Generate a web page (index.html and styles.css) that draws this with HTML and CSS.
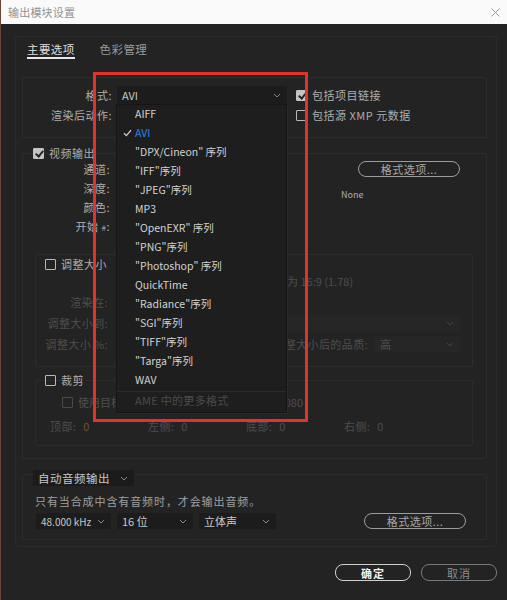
FILE: index.html
```html
<!DOCTYPE html>
<html lang="zh-CN">
<head>
  <meta charset="UTF-8">
  <title>输出模块设置</title>
  <link rel="stylesheet" href="styles.css">
</head>
<body>
  <div class="window">
    <div class="titlebar">
      <span>输出模块设置</span>
      <svg class="close" width="9" height="9" viewBox="0 0 9 9"><path d="M0.5 0.5l8 8M8.5 0.5l-8 8" stroke="#9a9a9a" stroke-width="1"/></svg>
    </div>

    <div class="main">
      <div class="tabs">
        <span class="tab active">主要选项</span>
        <span class="tab">色彩管理</span>
      </div>

      <!-- format -->
      <div class="box format">
        <div class="frow">
          <span class="lbl">格式:</span>
          <div class="select wide"><span>AVI</span><svg class="chev" width="8" height="5" viewBox="0 0 8 5"><path d="M1 1l3 3 3-3" fill="none" stroke="currentColor"/></svg></div>
          <span class="cb on"></span><span class="cbl">包括项目链接</span>
        </div>
        <div class="frow">
          <span class="lbl">渲染后动作:</span>
          <div class="select wide"></div>
          <span class="cb"></span><span class="cbl">包括源 XMP 元数据</span>
        </div>
      </div>

      <!-- video -->
      <div class="group video">
        <div class="legend"><span class="cb on"></span><span>视频输出</span></div>
        <div class="vrow">
          <span class="vl">通道:</span><span class="vv"></span>
          <div class="vr"><span class="btn fmt">格式选项...</span></div>
        </div>
        <div class="vrow">
          <span class="vl">深度:</span><span class="vv"></span>
          <div class="vr"><span class="none">None</span></div>
        </div>
        <div class="vrow">
          <span class="vl">颜色:</span><span class="vv"></span>
        </div>
        <div class="vrow">
          <span class="vl">开始 <small>#</small>:</span><span class="vv"></span>
        </div>

        <div class="group sub resize">
          <div class="legend"><span class="cb"></span><span>调整大小</span></div>
          <div class="rrow">
            <span></span><span></span><span class="dim">为 16:9 (1.78)</span>
          </div>
          <div class="rrow">
            <span class="rl dim">渲染在:</span><span></span><span></span>
          </div>
          <div class="rrow">
            <span class="rl dim">调整大小到:</span><span></span>
            <div class="select dimsel"><span></span><svg class="chev" width="8" height="5" viewBox="0 0 8 5"><path d="M1 1l3 3 3-3" fill="none" stroke="currentColor"/></svg></div>
          </div>
          <div class="rrow">
            <span class="rl dim">调整大小 %:</span>
            <div class="quality">
              <span class="dim">调整大小后的品质:</span>
              <div class="select dimsel q"><span>高</span><svg class="chev" width="8" height="5" viewBox="0 0 8 5"><path d="M1 1l3 3 3-3" fill="none" stroke="currentColor"/></svg></div>
            </div>
          </div>
        </div>

        <div class="group sub crop">
          <div class="legend"><span class="cb"></span><span>裁剪</span></div>
          <div class="crow1">
            <span class="cb dimcb"></span><span class="dim">使用目标</span>
            <span class="dim size">1080</span>
          </div>
          <div class="crow2">
            <span class="dim">顶部: <b class="hot">0</b></span>
            <span class="dim">左侧: <b>0</b></span>
            <span class="dim">底部: <b>0</b></span>
            <span class="dim">右侧: <b>0</b></span>
          </div>
        </div>
      </div>

      <!-- audio -->
      <div class="group audio">
        <div class="select auto"><span>自动音频输出</span><svg class="chev" width="8" height="5" viewBox="0 0 8 5"><path d="M1 1l3 3 3-3" fill="none" stroke="currentColor"/></svg></div>
        <p class="note">只有当合成中含有音频时，才会输出音频。</p>
        <div class="arow">
          <div class="select s1"><span class="latin">48.000 kHz</span><svg class="chev" width="8" height="5" viewBox="0 0 8 5"><path d="M1 1l3 3 3-3" fill="none" stroke="currentColor"/></svg></div>
          <div class="select s2"><span>16 位</span><svg class="chev" width="8" height="5" viewBox="0 0 8 5"><path d="M1 1l3 3 3-3" fill="none" stroke="currentColor"/></svg></div>
          <div class="select s3"><span>立体声</span><svg class="chev" width="8" height="5" viewBox="0 0 8 5"><path d="M1 1l3 3 3-3" fill="none" stroke="currentColor"/></svg></div>
          <span class="btn fmt">格式选项...</span>
        </div>
      </div>
    </div>

    <div class="footer">
      <span class="btn ok">确定</span>
      <span class="btn cancel">取消</span>
    </div>

    <!-- open format list -->
    <ul class="menu">
      <li>AIFF</li>
      <li class="sel"><svg class="tick" width="9" height="8" viewBox="0 0 9 8"><path d="M1 4.2l2.4 2.4L8 1.2" fill="none" stroke="#d0d0d0" stroke-width="1.3"/></svg>AVI</li>
      <li>"DPX/Cineon" 序列</li>
      <li>"IFF"序列</li>
      <li>"JPEG"序列</li>
      <li>MP3</li>
      <li>"OpenEXR" 序列</li>
      <li>"PNG"序列</li>
      <li>"Photoshop" 序列</li>
      <li>QuickTime</li>
      <li>"Radiance"序列</li>
      <li>"SGI"序列</li>
      <li>"TIFF"序列</li>
      <li>"Targa"序列</li>
      <li>WAV</li>
      <li class="more">AME 中的更多格式</li>
    </ul>

    <div class="mark"></div>
  </div>
</body>
</html>
```

FILE: styles.css
```css
* {
  box-sizing: border-box;
}
body {
  margin: 0;
  background: #232323;
  font-family: "Noto Sans CJK SC", "Noto Sans", sans-serif;
  font-size: 11px;
  color: #aeaeae;
}
.window {
  position: relative;
  width: 507px;
  height: 600px;
  background: #232323;
  border-left: 1px solid #6a4537;
  overflow: hidden;
}
.titlebar {
  height: 24px;
  background: #fafafa;
  display: flex;
  align-items: center;
  justify-content: space-between;
  padding: 0 7px 0 7px;
  color: #939393;
  font-size: 11px;
  letter-spacing: 0.2px;
}
.main {
  margin: 12px 10px 0 14px;
  border: 1px solid #2c2c2c;
  border-radius: 3px;
  padding: 4px 9px 6px 6px;
}
.tabs {
  display: flex;
  gap: 25px;
  margin-left: 5px;
}
.tab {
  height: 18px;
  line-height: 16px;
  font-size: 11.5px;
  color: #9a9a9a;
  letter-spacing: 0.4px;
}
.tab.active {
  color: #dedede;
  border-bottom: 2px solid #e8e8e8;
}
.box {
  border: 1px solid #2c2c2c;
  border-radius: 2px;
}
.format {
  margin-top: 18px;
  padding: 8px 0 13px;
  display: flex;
  flex-direction: column;
  gap: 2px;
}
.frow {
  display: flex;
  align-items: center;
  height: 18px;
}
.lbl {
  width: 89px;
  text-align: right;
  margin-right: 5px;
  letter-spacing: 0.5px;
}
.select {
  display: flex;
  align-items: center;
  justify-content: space-between;
  height: 16px;
  background: #1c1c1c;
  color: #c8c8c8;
  padding: 0 6px 0 5px;
  border-radius: 1px;
}
.select .chev {
  color: #8a8a8a;
}
.select.wide {
  width: 170px;
  height: 18px;
  margin-right: 9px;
}
.cb {
  display: inline-block;
  width: 11px;
  height: 11px;
  border: 1px solid #b8b8b8;
  border-radius: 1px;
  margin-right: 5px;
  position: relative;
  flex: none;
}
.cb.on {
  background: #c4c4c4;
  border-color: #c4c4c4;
}
.cb.on::after {
  content: "";
  position: absolute;
  left: 3px;
  top: 0px;
  width: 3px;
  height: 6px;
  border: solid #262626;
  border-width: 0 2px 2px 0;
  transform: rotate(40deg);
}
.cbl {
  letter-spacing: 0.5px;
}
.group {
  border: 1px solid #2c2c2c;
  border-radius: 2px;
}
.legend {
  display: flex;
  align-items: center;
  height: 12px;
  margin-top: -7px;
  letter-spacing: 0.5px;
}
.legend span:last-child {
  background: #232323;
  padding-right: 2px;
}
.video {
  margin-top: 15px;
  padding: 0 0 12px;
}
.video > .legend {
  margin-left: 10px;
}
.vrow {
  display: flex;
  height: 19px;
  align-items: center;
}
.vrow:first-of-type {
  margin-top: 6px;
}
.vl {
  width: 87px;
  text-align: right;
  letter-spacing: 0.5px;
}
.vl small {
  font-size: 8px;
}
.vv {
  flex: 1;
}
.vr {
  width: 145px;
}
.btn {
  display: flex;
  align-items: center;
  justify-content: center;
  height: 16px;
  border: 1px solid #9c9c9c;
  border-radius: 8px;
  color: #a8a8a8;
  letter-spacing: 0.5px;
}
.vr .fmt {
  width: 102px;
  margin-left: 17px;
  margin-top: 1px;
}
.none {
  display: block;
  margin-top: 14px;
  font-size: 9px;
  color: #b0b0b0;
}
.sub {
  margin-left: 12px;
  margin-right: 13px;
}
.sub .legend {
  margin-left: 9px;
}
.dim {
  color: #4e4e4e;
}
.resize {
  margin-top: 19px;
  padding: 10px 0 12px;
}
.rrow {
  display: grid;
  grid-template-columns: 72px 169px 173px;
  column-gap: 5px;
  height: 20px;
  align-items: center;
  margin-top: 1px;
}
.rl {
  text-align: right;
  letter-spacing: 0.4px;
}
.dimsel {
  background: #262626;
  color: #505050;
}
.dimsel .chev {
  color: #444;
}
.quality {
  grid-column: 2 / 4;
  display: flex;
  justify-content: flex-end;
  align-items: center;
  gap: 7px;
  letter-spacing: 0.4px;
}
.q {
  width: 85px;
}
.crop {
  margin-top: 13px;
  padding: 0 0 10px;
}
.crow1 {
  display: flex;
  align-items: center;
  height: 18px;
  margin-top: 7px;
  padding-left: 26px;
}
.crow1 .dimcb {
  border-color: #4a4a4a;
}
.size {
  margin-left: auto;
  margin-right: 169px;
}
.crow2 {
  display: flex;
  align-items: center;
  height: 18px;
  margin-top: 6px;
  padding-left: 14px;
}
.crow2 span {
  width: 98px;
  letter-spacing: 0.4px;
}
.crow2 b {
  font-weight: normal;
  margin-left: 4px;
  color: #4e4e4e;
}
.crow2 b.hot {
  color: #6a5428;
}
.audio {
  margin-top: 15px;
  padding: 0 0 10px;
}
.auto {
  width: 101px;
  margin-left: 10px;
  margin-top: -5px;
  font-size: 11.5px;
  letter-spacing: 0.5px;
  background: #1b1b1b;
}
.note {
  margin: 8px 0 0 12px;
  line-height: 14px;
  font-size: 11px;
  letter-spacing: 0.9px;
  color: #a0a0a0;
}
.arow {
  display: flex;
  align-items: center;
  margin-top: 5px;
  padding-left: 13px;
}
.arow .select {
  margin-right: 6px;
}
.s1 {
  width: 75px;
}
.s1 .latin {
  font-size: 10px;
}
.s2 {
  width: 76px;
}
.s3 {
  width: 77px;
}
.arow .fmt {
  width: 102px;
  margin-left: 82px;
}
.footer {
  display: flex;
  justify-content: flex-end;
  gap: 10px;
  margin-top: 17px;
  padding-right: 10px;
}
.footer .btn {
  width: 76px;
  height: 17px;
}
.ok {
  border-color: #d0d0d0;
  color: #f0f0f0;
  font-weight: bold;
  letter-spacing: 1px;
}
.cancel {
  border-color: #7a7a7a;
  color: #8c8c8c;
  letter-spacing: 1px;
}
.menu {
  position: absolute;
  left: 115px;
  top: 104px;
  width: 171px;
  margin: 0;
  padding: 0;
  list-style: none;
  background: #1e1e1e;
  border: 1px solid #161616;
  box-shadow: 1px 1px 0 #2a2a2a;
}
.menu li {
  position: relative;
  height: 19px;
  line-height: 17px;
  padding-left: 18px;
  color: #d2d2d2;
  font-size: 10.5px;
}
.menu li.sel {
  color: #2d86e6;
}
.menu .tick {
  position: absolute;
  left: 6px;
  top: 5px;
}
.menu li.more {
  margin-top: 1px;
  border-top: 1px solid #2b2b2b;
  height: 21px;
  line-height: 17px;
  color: #4b4b4b;
  font-size: 11px;
  letter-spacing: 0.3px;
}
.mark {
  position: absolute;
  left: 92px;
  top: 72px;
  width: 215px;
  height: 350px;
  border: 3px solid #e3322b;
}
```
